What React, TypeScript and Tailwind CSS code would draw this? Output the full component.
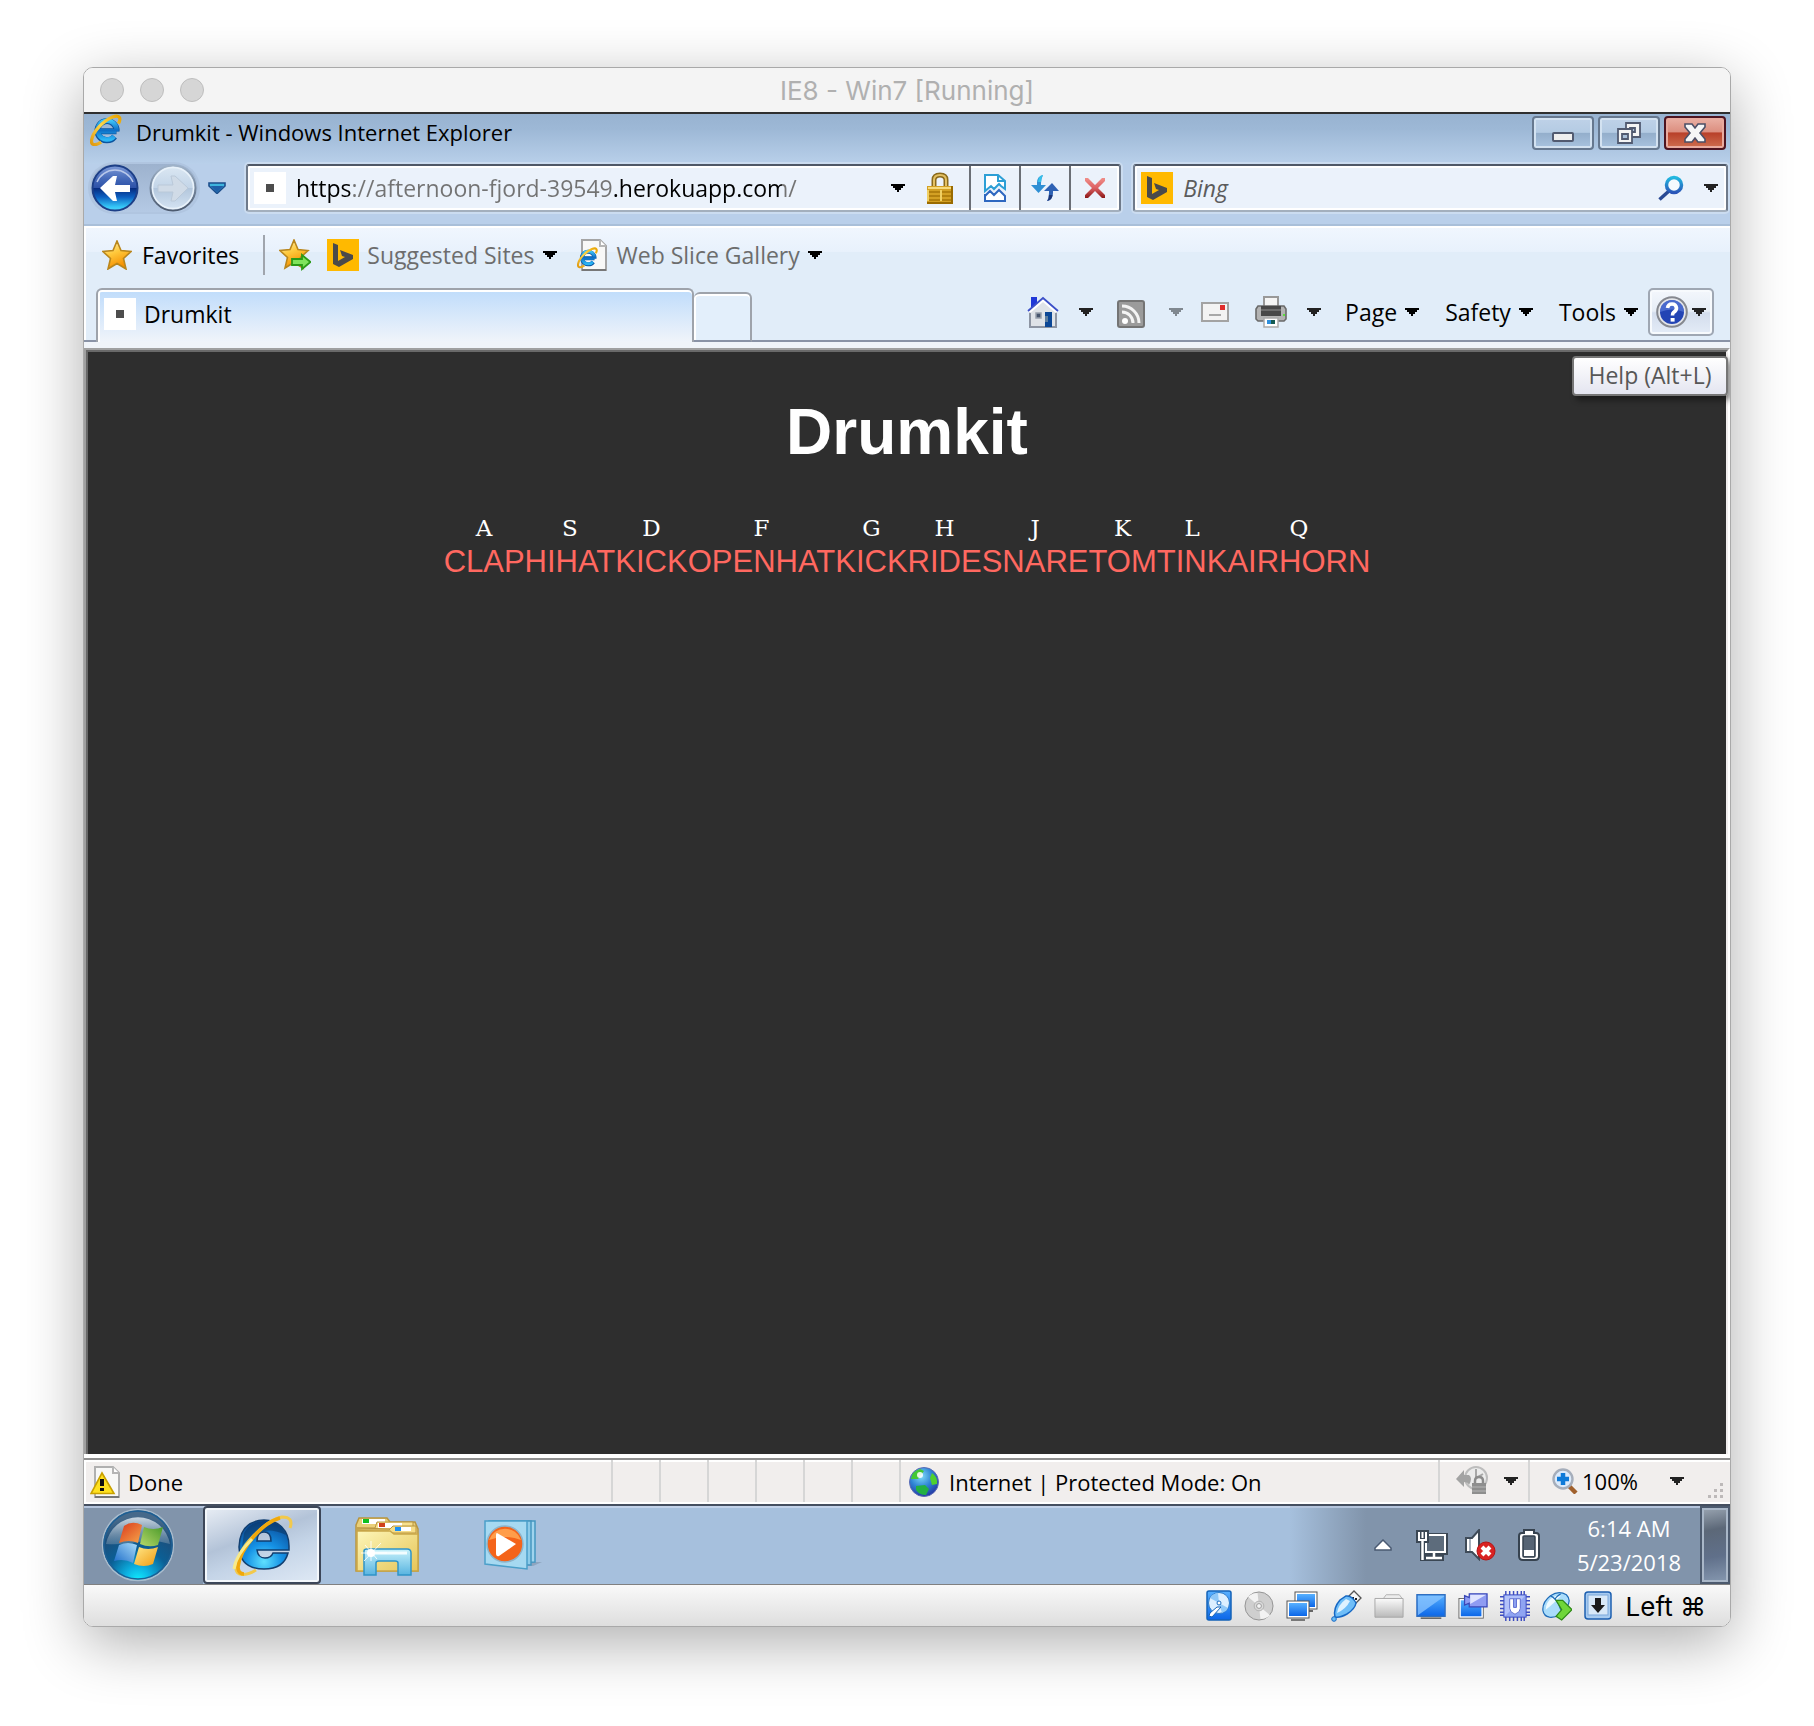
import React from "react";

const SEGOE = "font-['Open_Sans','Noto_Sans',sans-serif]";

/* ---------- shared paint ---------- */

function Paints() {
  return (
    <svg className="absolute size-0" aria-hidden="true">
      <defs>
        <radialGradient id="ieBlue" cx="0.5" cy="0.85" r="0.8">
          <stop offset="0" stopColor="#5fe0ff" />
          <stop offset="0.45" stopColor="#1592e6" />
          <stop offset="1" stopColor="#0b4f9c" />
        </radialGradient>
        <linearGradient id="ieSmall" x1="0" y1="0" x2="0" y2="1">
          <stop offset="0" stopColor="#3fc4f8" />
          <stop offset="0.5" stopColor="#0d6cc4" />
          <stop offset="1" stopColor="#2bb6f6" />
        </linearGradient>
        <linearGradient id="ieGold" x1="1" y1="0" x2="0" y2="1">
          <stop offset="0" stopColor="#e9a400" />
          <stop offset="0.5" stopColor="#ffd84a" />
          <stop offset="1" stopColor="#e09a10" />
        </linearGradient>
        <linearGradient id="starFill" x1="0" y1="0" x2="0.4" y2="1">
          <stop offset="0" stopColor="#fff3b8" />
          <stop offset="0.5" stopColor="#ffc93c" />
          <stop offset="1" stopColor="#f58f00" />
        </linearGradient>
        <linearGradient id="screenBlue" x1="0" y1="0" x2="0" y2="1">
          <stop offset="0" stopColor="#57b0ff" />
          <stop offset="1" stopColor="#0b66e8" />
        </linearGradient>
        <linearGradient id="tealBlue" x1="0" y1="0" x2="0" y2="1">
          <stop offset="0" stopColor="#22b8e0" />
          <stop offset="1" stopColor="#2a55b8" />
        </linearGradient>
        <linearGradient id="silver" x1="0" y1="0" x2="0" y2="1">
          <stop offset="0" stopColor="#fbfbfb" />
          <stop offset="1" stopColor="#b9b9b9" />
        </linearGradient>
      </defs>
    </svg>
  );
}

/* ---------- browser icons ---------- */

function Caret({ className = "text-black" }: { className?: string }) {
  return (
    <svg className={`h-2 w-3.5 shrink-0 ${className}`} viewBox="0 0 14 8" shapeRendering="crispEdges" aria-hidden="true">
      <path fill="currentColor" d="M0 0H14V2H12V4H10V6H8V8H6V6H4V4H2V2H0Z" />
    </svg>
  );
}

function IeGlyph() {
  return (
    <>
      <path d="M26.5 17.2H9.5M26.6 17.4A9.6 9.6 0 1 0 24.6 22.6" fill="none" stroke="#0b559f" strokeWidth="6" />
      <path d="M26 17.2H9.5M26.4 17.2A9.4 9.4 0 1 0 24.2 22.2" fill="none" stroke="url(#ieSmall)" strokeWidth="4.6" />
      <path d="M28.4 9.6C31.6 4 29.4 .4 22.6 3 13.4 6.6 3 17.6 1.6 26c-.9 5.4 3.6 6 9.6 2.2" fill="none" stroke="url(#ieGold)" strokeWidth="3.200" />
    </>
  );
}

function IeIcon() {
  return (
    <svg className="size-8 shrink-0" viewBox="0 0 32 32" aria-hidden="true">
      <IeGlyph />
    </svg>
  );
}

function IePageIcon() {
  return (
    <svg className="size-8 shrink-0" viewBox="0 0 32 32" aria-hidden="true">
      <path d="M5 1H23L29 7V31H5Z" fill="#f8f8f7" stroke="#a5a5a5" strokeWidth="2" />
      <path d="M5 31H29" stroke="#777" strokeWidth="2" />
      <path d="M23 1V7H29" fill="#fff" stroke="#b5b5b5" strokeWidth="2" />
      <g transform="translate(0 8) scale(.66)">
        <IeGlyph />
      </g>
    </svg>
  );
}

function Favicon() {
  return (
    <svg className="size-8 shrink-0" viewBox="0 0 32 32" aria-hidden="true">
      <rect width="32" height="32" fill="#fff" />
      <rect x="12" y="12" width="8" height="8" fill="#4d4d4d" />
    </svg>
  );
}

function BingIcon() {
  return (
    <svg className="size-8 shrink-0" viewBox="0 0 32 32" aria-hidden="true">
      <rect width="32" height="32" fill="#ffb900" />
      <path d="M6 4 11 6V22L18 18 15 17 13 11 26 16V20L12 28 6 25Z" fill="#4a4a4a" />
    </svg>
  );
}

function BackIcon() {
  return (
    <svg className="size-12" viewBox="0 0 48 48" aria-hidden="true">
      <defs>
        <linearGradient id="backFill" x1="0" y1="0" x2="0" y2="1">
          <stop offset="0" stopColor="#7f9bd8" />
          <stop offset="0.3" stopColor="#4468b8" />
          <stop offset="0.49" stopColor="#2d52a8" />
          <stop offset="0.5" stopColor="#06297c" />
          <stop offset="0.7" stopColor="#0c5fc0" />
          <stop offset="0.92" stopColor="#35c8f8" />
          <stop offset="1" stopColor="#4fd6f8" />
        </linearGradient>
      </defs>
      <circle cx="24" cy="24" r="22.500" fill="url(#backFill)" stroke="#1d3f87" strokeWidth="2" />
      <path d="M6 18A19.500 19.500 0 0 1 42 18" fill="none" stroke="#b9c8ea" strokeWidth="1.500" />
      <path d="M9 24 22 12H26L24 21H39V28H24L26 37H22Z" fill="#fff" />
    </svg>
  );
}

function ForwardIcon() {
  return (
    <svg className="size-12" viewBox="0 0 48 48" aria-hidden="true">
      <defs>
        <linearGradient id="fwdFill" x1="0" y1="0" x2="0" y2="1">
          <stop offset="0" stopColor="#dce8f3" />
          <stop offset="0.49" stopColor="#c3d5e8" />
          <stop offset="0.5" stopColor="#b2c6dc" />
          <stop offset="1" stopColor="#d6e5f4" />
        </linearGradient>
        <linearGradient id="fwdEdge" x1="0" y1="0" x2="0" y2="1">
          <stop offset="0" stopColor="#9fb2c8" />
          <stop offset="1" stopColor="#4d5b70" />
        </linearGradient>
      </defs>
      <circle cx="24" cy="24" r="22.500" fill="url(#fwdFill)" stroke="url(#fwdEdge)" strokeWidth="2" />
      <circle cx="24" cy="24" r="20.500" fill="none" stroke="#e9f2fa" strokeWidth="1.500" />
      <path d="M39 24 26 12H22L24 21H9V28H24L22 37H26Z" fill="#d0dbe7" stroke="#bac9d9" />
    </svg>
  );
}

function HistoryIcon() {
  return (
    <svg className="h-3 w-[18px]" viewBox="0 0 18 12" aria-hidden="true">
      <path d="M1 1H17V4L9 11.500 1 4Z" fill="#3fb4dd" stroke="#1d4e8c" strokeWidth="1.600" />
      <path d="M2.500 4H15.500L9 10.500Z" fill="#1f5fa8" />
    </svg>
  );
}

function LockIcon() {
  return (
    <svg className="h-8 w-[26px] shrink-0" viewBox="0 0 26 32" aria-hidden="true">
      <path d="M7 15V8Q7 3 13 3T19 8V15" fill="none" stroke="#8a6a1c" strokeWidth="5" />
      <path d="M7 15V8Q7 3 13 3T19 8V15" fill="none" stroke="#e2bf62" strokeWidth="2" />
      <rect y="14" width="26" height="18" fill="#d3a023" />
      <path d="M1 16H25" stroke="#f6da7c" strokeWidth="2" />
      <path d="M1 20H24M1 24H24M1 28H24" stroke="#a87508" strokeWidth="1.500" />
      <path d="M1 18V29M14 18V29" stroke="#f0cf62" strokeWidth="2" />
      <path d="M0 31H26M25 14V32" stroke="#9a6b00" strokeWidth="2" />
    </svg>
  );
}

function CompatIcon() {
  return (
    <svg className="h-8 w-7" viewBox="0 0 28 32" fill="none" aria-hidden="true">
      <path d="M4 14V3H17L24 9V17L20 14 18 12 13 17 10 14 4 19V14" fill="#fff" stroke="#2c9fd6" strokeWidth="2" />
      <path d="M17 3V9H24" stroke="#2c9fd6" strokeWidth="2" />
      <path d="M4 22V29H24V24L18 18 13 23 9 19 4 24" fill="#fff" stroke="#2f68c0" strokeWidth="2" />
    </svg>
  );
}

function RefreshIcon() {
  return (
    <svg className="h-7 w-7" viewBox="0 0 28 28" aria-hidden="true">
      <path d="M12 1Q6 2 6 9V11H0L7.500 19 15 11H10V9Q10 5 12 1Z" fill="#2f8fd4" />
      <path d="M12 1Q7 2 7 8L10 8Q10 4 12 1Z" fill="#35c2ea" />
      <path d="M16 27Q22 26 22 19V17H28L21 9 13 17H18V19Q18 24 16 27Z" fill="#2f62b4" />
      <path d="M16 27Q21 26 21.500 21H18Q18 25 16 27Z" fill="#1c3577" />
    </svg>
  );
}

function StopIcon() {
  return (
    <svg className="size-[22px]" viewBox="0 0 22 22" aria-hidden="true">
      <defs>
        <linearGradient id="stopFill" x1="0" y1="0" x2="0" y2="1">
          <stop offset="0" stopColor="#f08f8a" />
          <stop offset="0.5" stopColor="#dc5f62" />
          <stop offset="1" stopColor="#8b1818" />
        </linearGradient>
      </defs>
      <path d="M1 1H4L11 8 18 1H21V4L14 11 21 18V21H18L11 14 4 21H1V18L8 11 1 4Z" fill="url(#stopFill)" />
    </svg>
  );
}

function SearchIcon() {
  return (
    <svg className="size-[26px]" viewBox="0 0 26 26" fill="none" aria-hidden="true">
      <path d="M11 16 1.500 24.500" stroke="#2a4a94" strokeWidth="3.500" />
      <circle cx="16" cy="10" r="7.500" fill="#f4fafe" stroke="url(#tealBlue)" strokeWidth="3.500" />
    </svg>
  );
}

const STAR = "M15 1 19 10.500 29 11.500 21.500 18.500 24 29 15 23.500 6 29 8.500 18.500 1 11.500 11 10.500Z";

function StarIcon() {
  return (
    <svg className="size-[30px] shrink-0" viewBox="0 0 30 30" aria-hidden="true">
      <path d={STAR} fill="url(#starFill)" stroke="#b9861c" strokeWidth="1.600" />
    </svg>
  );
}

function StarAddIcon() {
  return (
    <svg className="size-8 shrink-0" viewBox="0 0 32 32" aria-hidden="true">
      <path d={STAR} fill="url(#starFill)" stroke="#b9861c" strokeWidth="1.600" />
      <path d="M13 20H23V16L31.500 23 23 30V26H13Z" fill="#7fe35c" stroke="#2b9a17" strokeWidth="1.800" />
    </svg>
  );
}

function HomeIcon() {
  return (
    <svg className="size-8 shrink-0" viewBox="0 0 32 32" aria-hidden="true">
      <rect x="4" y="1" width="6" height="10" fill="#2038d8" />
      <path d="M3 15 16 4 29 15V31H3Z" fill="#dfe3e8" stroke="#8d95a3" strokeWidth="2" />
      <path d="M2 16 16 4 30 16" fill="none" stroke="#fff" strokeWidth="3" />
      <path d="M1 15 16 2 31 15" fill="none" stroke="#3c50c8" strokeWidth="1.800" />
      <rect x="9" y="17" width="5" height="5" fill="#46546c" stroke="#98a0ac" strokeWidth="1.500" />
      <rect x="18" y="16" width="7" height="15" fill="#0b4796" />
      <rect x="18" y="20" width="3" height="6" fill="#5c7ea0" />
    </svg>
  );
}

function RssIcon() {
  return (
    <svg className="size-7 shrink-0" viewBox="0 0 28 28" aria-hidden="true">
      <rect x="1" y="1" width="26" height="26" rx="2" fill="#9b9b9b" stroke="#747474" strokeWidth="2" />
      <circle cx="8" cy="21" r="3" fill="#fff" />
      <path d="M5 12A11 11 0 0 1 16 23M5 6A17 17 0 0 1 22 23" fill="none" stroke="#f4f4f4" strokeWidth="3" />
    </svg>
  );
}

function MailIcon() {
  return (
    <svg className="h-5 w-7 shrink-0" viewBox="0 0 28 20" aria-hidden="true">
      <rect x="1" y="1" width="26" height="18" fill="#f3f3f3" stroke="#a3a3a3" strokeWidth="2" />
      <path d="M8 13H20" stroke="#8f8f8f" strokeWidth="1.500" />
      <rect x="19" y="3" width="5" height="5" fill="#e02c2c" />
    </svg>
  );
}

function PrinterIcon() {
  return (
    <svg className="size-8 shrink-0" viewBox="0 0 32 32" aria-hidden="true">
      <rect x="9" y="1" width="14" height="12" fill="#f5f5f5" stroke="#999" strokeWidth="2" />
      <path d="M3 10H29L31 13V23L29 25H3L1 23V13Z" fill="#b3b3b3" stroke="#6a6a6a" strokeWidth="1.600" />
      <rect x="6" y="10" width="20" height="10" fill="#484848" />
      <path d="M6 14H26" stroke="#6c6c6c" strokeWidth="2" />
      <rect x="28" y="18" width="2" height="2" fill="#5be03c" />
      <rect x="9" y="22" width="14" height="9" fill="#fff" stroke="#aaa" strokeWidth="1.500" />
      <path d="M12 24H20V28H12Z" fill="#2f8fdc" />
      <path d="M16 24H20V28H16Z" fill="#155b52" />
    </svg>
  );
}

function HelpIcon() {
  return (
    <svg className="size-8 shrink-0" viewBox="0 0 32 32" aria-hidden="true">
      <circle cx="16" cy="16" r="14.800" fill="#e4e6ea" stroke="#85888f" strokeWidth="2" />
      <circle cx="16" cy="16" r="12" fill="#2344b4" />
      <path d="M4 16A12 12 0 0 1 28 16Q16 11 4 16Z" fill="#5a7ad8" opacity=".7" />
      <path d="M11.500 12Q12 8 16 8T20.500 12Q20.500 14.500 17.500 16.500 16.500 17.300 16.500 19.500" fill="none" stroke="#fff" strokeWidth="3.600" />
      <rect x="14.600" y="22" width="4" height="3.600" fill="#fff" />
    </svg>
  );
}

function WarningPageIcon() {
  return (
    <svg className="size-8 shrink-0" viewBox="0 0 32 32" aria-hidden="true">
      <path d="M5 1H23L29 7V31H5Z" fill="#f8f8f7" stroke="#b0b0b0" strokeWidth="2" />
      <path d="M5 31H29" stroke="#777" strokeWidth="2" />
      <path d="M23 1V7H29" fill="#fff" stroke="#b5b5b5" strokeWidth="2" />
      <path d="M12 7 24 27.500H1Z" fill="#ffe11f" stroke="#c9a100" strokeWidth="1.600" />
      <path d="M12 13V20" stroke="#111" strokeWidth="4" />
      <rect x="10" y="22" width="4" height="3" fill="#111" />
    </svg>
  );
}

function GlobeIcon() {
  return (
    <svg className="size-[30px] shrink-0" viewBox="0 0 30 30" aria-hidden="true">
      <defs>
        <radialGradient id="sea" cx="0.4" cy="0.3" r="0.75">
          <stop offset="0" stopColor="#7fdcf8" />
          <stop offset="0.5" stopColor="#2f84d4" />
          <stop offset="1" stopColor="#2430a0" />
        </radialGradient>
      </defs>
      <circle cx="15" cy="15" r="14.500" fill="url(#sea)" stroke="#5a6bb5" />
      <path d="M2 12Q3 4 11 2L15 4 9 12Z" fill="#43c834" />
      <path d="M23 6Q29 10 28 17L23 18 21 11Z" fill="#4fd02e" />
      <path d="M7 19 16 18 20 22 17 28Q10 28 7 23Z" fill="#22b043" />
      <circle cx="11" cy="8" r="3" fill="#fff" opacity=".85" />
    </svg>
  );
}

function PrivacyIcon() {
  return (
    <svg className="size-8 shrink-0" viewBox="0 0 32 32" aria-hidden="true">
      <circle cx="20" cy="13" r="11" fill="#ececec" stroke="#bdbdbd" strokeWidth="2" />
      <path d="M20 4V13L27 9" fill="none" stroke="#a8a8a8" strokeWidth="2" />
      <path d="M0 14 8 5V10H13Q17 13 13 20 12 17 8 17V22Z" fill="#a3a3a3" />
      <path d="M19 20V16Q19 12 23 12T27 16V20" fill="none" stroke="#8c8c8c" strokeWidth="2.500" />
      <rect x="16" y="18" width="14" height="11" fill="#8e8e8e" />
      <path d="M16 22H30M16 26H30" stroke="#a9a9a9" strokeWidth="1.500" />
    </svg>
  );
}

function ZoomIcon() {
  return (
    <svg className="size-[26px] shrink-0" viewBox="0 0 26 26" aria-hidden="true">
      <path d="M16 17 24 25" stroke="#a0602c" strokeWidth="4.500" />
      <circle cx="11" cy="11" r="9.500" fill="#dceafb" stroke="#a6aebb" strokeWidth="2.400" />
      <path d="M11 5V17M5 11H17" stroke="#0f7ad8" strokeWidth="4.500" />
    </svg>
  );
}

function GripIcon() {
  return (
    <svg className="size-4 shrink-0" viewBox="0 0 16 16" fill="#bdb9b9" aria-hidden="true">
      <path d="M12 0H15V3H12ZM6 6H9V9H6ZM12 6H15V9H12ZM0 12H3V15H0ZM6 12H9V15H6ZM12 12H15V15H12Z" />
    </svg>
  );
}

/* ---------- taskbar icons ---------- */

function StartOrb() {
  return (
    <svg className="size-[74px]" viewBox="0 0 74 74" aria-hidden="true">
      <defs>
        <radialGradient id="orb" cx="0.5" cy="1" r="0.9">
          <stop offset="0" stopColor="#0ff0ff" />
          <stop offset="0.2" stopColor="#0cb4e4" />
          <stop offset="0.5" stopColor="#0b5f95" />
          <stop offset="0.8" stopColor="#1c4f7c" />
          <stop offset="1" stopColor="#46698a" />
        </radialGradient>
        <linearGradient id="orbGloss" x1="0" y1="0" x2="0" y2="1">
          <stop offset="0" stopColor="#d2dde6" stopOpacity="0.95" />
          <stop offset="1" stopColor="#7c97ae" stopOpacity="0.45" />
        </linearGradient>
        <linearGradient id="flagRed" x1="0" y1="0" x2="1" y2="1">
          <stop offset="0" stopColor="#d8371c" />
          <stop offset="1" stopColor="#f7a64a" />
        </linearGradient>
        <linearGradient id="flagGreen" x1="1" y1="0" x2="0" y2="1">
          <stop offset="0" stopColor="#4a9a2a" />
          <stop offset="1" stopColor="#b7d86a" />
        </linearGradient>
        <linearGradient id="flagBlue" x1="1" y1="0" x2="0" y2="1">
          <stop offset="0" stopColor="#a9dcfa" />
          <stop offset="1" stopColor="#1c6cc8" />
        </linearGradient>
        <linearGradient id="flagYellow" x1="0" y1="0" x2="1" y2="1">
          <stop offset="0" stopColor="#ffe98a" />
          <stop offset="1" stopColor="#f09a10" />
        </linearGradient>
      </defs>
      <circle cx="37" cy="37" r="35.500" fill="url(#orb)" stroke="#a9bccd" strokeWidth="1.500" />
      <circle cx="37" cy="37" r="34" fill="none" stroke="#1d5f94" strokeWidth="1.500" />
      <path d="M5 36A32.500 32.500 0 0 1 69 36Q54 31 37 34T5 36Z" fill="url(#orbGloss)" />
      <path d="M23 18Q31 12 41 17L37 35Q28 31 18 35Z" fill="url(#flagRed)" />
      <path d="M43 19Q52 23 62 19L57 37Q48 40 39 36Z" fill="url(#flagGreen)" />
      <path d="M18 37Q27 33 36 37L32 55Q23 50 13 53Z" fill="url(#flagBlue)" />
      <path d="M38 39Q47 43 57 39L52 56Q43 60 33 56Z" fill="url(#flagYellow)" />
    </svg>
  );
}

function IeBigIcon() {
  return (
    <svg className="size-16" viewBox="0 0 64 64" aria-hidden="true">
      <path
        d="M34 7C48 7 59 17 59 33V37H27Q28 45 35 45 41 45 43 40H58Q54 56 34 56 10 56 9 34 10 8 34 7ZM27 28H41Q41 19 34 19T27 28Z"
        fill="url(#ieBlue)"
        stroke="#123f70"
        strokeWidth="1.500"
      />
      <path d="M14 20Q20 9 33 8 50 8 56 22 40 14 27 20 16 26 12 34Z" fill="#0b2c50" opacity=".45" />
      <path d="M60 15Q64 4 52 4C36 7 8 34 6 54 5 64 16 63 26 57" fill="none" stroke="#f2c94c" strokeWidth="3" />
      <path d="M50 5C34 9 10 34 8 54 8 60 12 61 14 61" fill="none" stroke="#f0a80c" strokeWidth="3.600" />
      <path d="M22 26C10 38 5 48 4 56" fill="none" stroke="#f7ea8c" strokeWidth="3" />
    </svg>
  );
}

function ExplorerIcon() {
  return (
    <svg className="size-16" viewBox="0 0 64 64" aria-hidden="true">
      <defs>
        <linearGradient id="folder" x1="0" y1="0" x2="1" y2="1">
          <stop offset="0" stopColor="#fdf6b8" />
          <stop offset="1" stopColor="#e6c558" />
        </linearGradient>
        <linearGradient id="stand" x1="0" y1="0" x2="0" y2="1">
          <stop offset="0" stopColor="#c8f2fb" />
          <stop offset="1" stopColor="#58b4e0" />
        </linearGradient>
      </defs>
      <path d="M1 10 4 3H32L35 7H60L63 14V56H1Z" fill="#e9cf78" stroke="#b89540" strokeWidth="1.500" />
      <rect x="7" y="4" width="23" height="5" fill="#fff" />
      <rect x="8" y="4" width="6" height="4" fill="#10c020" />
      <path d="M2 13H20L22 7H58V14H38Z" fill="#f7e08e" stroke="#b89540" />
      <rect x="23" y="8" width="24" height="5" fill="#fff" />
      <rect x="24" y="8" width="6" height="4" fill="#d0401c" />
      <path d="M2 15H34L38 11H61V18H38Z" fill="#f5dc86" stroke="#b89540" />
      <rect x="40" y="12" width="16" height="4" fill="#fff" />
      <rect x="40" y="12" width="6" height="4" fill="#1a90f4" />
      <path d="M2 16H35L39 19H63V56H2Z" fill="url(#folder)" stroke="#c9a648" strokeWidth="1.500" />
      <path d="M9 36Q9 34 12 34H52Q56 34 56 38V60H43V48Q43 46 40 46H24Q21 46 21 48V60H9Z" fill="url(#stand)" stroke="#2f94c8" strokeWidth="1.500" />
      <path d="M13 38H52" stroke="#f2fdff" strokeWidth="3" />
      <path d="M16 26V46M6 38H32M10 30 22 44M26 28 9 46" stroke="#fff" opacity=".85" />
      <circle cx="16" cy="38" r="4" fill="#fff" />
    </svg>
  );
}

function MediaPlayerIcon() {
  return (
    <svg className="h-[58px] w-[60px]" viewBox="0 0 60 58" aria-hidden="true">
      <path d="M46 46H59L50 50H44Z" fill="#7f93ac" opacity=".6" />
      <path d="M10 5H52V46L12 48Z" fill="#9fd4ee" stroke="#4596c0" strokeWidth="1.500" />
      <path d="M6 5H48V49L8 48Z" fill="#8ccbe9" stroke="#4596c0" strokeWidth="1.500" />
      <path d="M2 5H44V53L2 48Z" fill="#a6d9f1" stroke="#4b9fc9" strokeWidth="1.500" />
      <circle cx="22" cy="28" r="18" fill="#f4641a" stroke="#8cb4cc" strokeWidth="1.500" />
      <path d="M6 24A17 17 0 0 1 38 24Q22 18 6 24Z" fill="#ff9d4a" />
      <path d="M14 17 33 28 16 40Q13 41 13 37V19Q13 17 14 17Z" fill="#fff" />
    </svg>
  );
}

function TrayUpIcon() {
  return (
    <svg className="h-3 w-[18px]" viewBox="0 0 18 12" aria-hidden="true">
      <path d="M9 1 17 9V11H1V9Z" fill="#fff" stroke="#4a5a72" strokeWidth="1.500" />
    </svg>
  );
}

function TrayNetworkIcon() {
  return (
    <svg className="size-8" viewBox="0 0 32 32" aria-hidden="true">
      <rect x="8" y="4" width="24" height="22" fill="#3b4754" />
      <rect x="10" y="6" width="19" height="17" fill="#5d6c7c" stroke="#fff" strokeWidth="2" />
      <path d="M9 29H28M18 25V29" stroke="#3b4754" strokeWidth="6" />
      <path d="M10 29H26M18 24V29" stroke="#fff" strokeWidth="2.500" />
      <path d="M0 1H13V14H9V32H4V14H0Z" fill="#3b4754" />
      <path d="M3 3V11H10V3M6.500 3V9" fill="none" stroke="#fff" strokeWidth="2" />
      <path d="M6.500 11V31" stroke="#fff" strokeWidth="2.500" />
    </svg>
  );
}

function TrayVolumeIcon() {
  return (
    <svg className="size-8" viewBox="0 0 32 32" aria-hidden="true">
      <path d="M2 9H8L15 1V30L8 23H2Z" fill="#fff" stroke="#3f4b58" strokeWidth="2" />
      <path d="M6 10V22" stroke="#8b97a6" strokeWidth="1.500" />
      <circle cx="22" cy="22" r="9" fill="#d92222" stroke="#b41414" />
      <path d="M18 18 26 26M26 18 18 26" stroke="#fff" strokeWidth="4" />
    </svg>
  );
}

function TrayBatteryIcon() {
  return (
    <svg className="h-8 w-[22px]" viewBox="0 0 22 32" aria-hidden="true">
      <path d="M6 1H16V4H18Q21 4 21 7V27Q21 31 17 31H5Q1 31 1 27V7Q1 4 4 4H6Z" fill="#fff" stroke="#36424f" strokeWidth="2" />
      <rect x="5" y="7" width="12" height="21" rx="1" fill="#566474" stroke="#36424f" strokeWidth="1.500" />
      <rect x="6" y="21" width="10" height="6" fill="#fff" />
    </svg>
  );
}

/* ---------- virtual machine status icons ---------- */

function HardDiskIcon() {
  return (
    <svg className="h-[31px] w-[26px]" viewBox="0 0 26 31" aria-hidden="true">
      <rect x="1" y="1" width="24" height="29" rx="2" fill="url(#screenBlue)" stroke="#1463b8" strokeWidth="1.500" />
      <circle cx="13" cy="13" r="10.500" fill="#dcefff" stroke="#2f7cc8" />
      <path d="M13 13 4 8A10 10 0 0 1 12 3ZM13 13 22 18A10 10 0 0 1 16 23Z" fill="#8fc8f8" />
      <circle cx="13" cy="13" r="2" fill="#fff" stroke="#1a6cc0" />
      <path d="M15 17 6 27 3 26 4 23 11 17Z" fill="#fff" stroke="#1463b8" />
    </svg>
  );
}

function DiscIcon() {
  return (
    <svg className="size-[30px]" viewBox="0 0 31 31" aria-hidden="true">
      <circle cx="15.500" cy="15.500" r="14.500" fill="#cfcfcf" stroke="#929292" />
      <path d="M15.500 15.500 4 6A15 15 0 0 1 14 2ZM15.500 15.500 27 25A15 15 0 0 1 17 29Z" fill="#f3f3f3" />
      <circle cx="15.500" cy="15.500" r="5" fill="#d9d9d9" stroke="#b0b0b0" />
      <circle cx="15.500" cy="15.500" r="2.500" fill="#f6f6f6" stroke="#9a9a9a" />
    </svg>
  );
}

function VmNetworkIcon() {
  return (
    <svg className="h-[31px] w-8" viewBox="0 0 32 31" aria-hidden="true">
      <rect x="9" y="2" width="22" height="17" fill="#fff" stroke="#555" />
      <rect x="11" y="4" width="18" height="13" fill="url(#screenBlue)" />
      <path d="M20 21H27" stroke="#666" strokeWidth="2" />
      <rect x="1" y="11" width="22" height="17" fill="#fff" stroke="#555" />
      <rect x="3" y="13" width="18" height="13" fill="url(#screenBlue)" />
      <path d="M5 30H19" stroke="#555" strokeWidth="1.500" />
    </svg>
  );
}

function UsbIcon() {
  return (
    <svg className="size-8" viewBox="0 0 32 32" aria-hidden="true">
      <path d="M18 7 24 1 31 8 25 14Z" fill="#f6f6f6" stroke="#555" strokeWidth="1.300" />
      <path d="M22 7H24V9H22ZM25 8H27V10H25Z" fill="#222" />
      <path d="M16 6Q22 5 26 13 25 19 17 24 10 28 5 27 3 18 10 10Z" fill="#6fbef8" stroke="#1668c4" strokeWidth="1.500" />
      <path d="M7 23Q8 15 16 9L20 11Q16 19 7 23Z" fill="#dff2ff" />
      <circle cx="4" cy="29" r="2.300" fill="#6fc0f6" stroke="#1668c4" />
    </svg>
  );
}

function FolderIcon() {
  return (
    <svg className="h-[31px] w-[30px]" viewBox="0 0 32 31" aria-hidden="true">
      <path d="M10 8 13 4H27L30 8V12H10Z" fill="#ededed" stroke="#b0b0b0" />
      <path d="M1 8H31V28H1Z" fill="url(#silver)" stroke="#a5a5a5" />
    </svg>
  );
}

function DisplayIcon() {
  return (
    <svg className="h-[31px] w-[30px]" viewBox="0 0 32 31" aria-hidden="true">
      <rect x="1" y="4" width="30" height="23" fill="url(#screenBlue)" stroke="#2f6ec0" strokeWidth="1.500" />
      <path d="M2 26 30 6V5H2Z" fill="#8cc6ff" opacity=".75" />
      <path d="M5 29H27" stroke="#555" strokeWidth="1.500" />
    </svg>
  );
}

function CaptureIcon() {
  return (
    <svg className="h-[31px] w-[30px]" viewBox="0 0 32 31" aria-hidden="true">
      <rect x="1" y="8" width="26" height="21" fill="#fff" stroke="#666" />
      <rect x="3" y="10" width="22" height="17" fill="url(#screenBlue)" />
      <path d="M7 5 12 7V3H31V17H12V13L7 15Z" fill="#8f9cf2" stroke="#3a48b8" strokeWidth="1.300" />
      <path d="M13 4H30L13 14Z" fill="#dfe4ff" />
    </svg>
  );
}

function ChipIcon() {
  return (
    <svg className="size-[30px]" viewBox="0 0 31 31" aria-hidden="true">
      <path
        d="M6 0V31M10 0V31M14 0V31M18 0V31M22 0V31M25 0V31M0 6H31M0 10H31M0 14H31M0 18H31M0 22H31M0 25H31"
        stroke="#3c4cc0"
        strokeWidth="1.500"
      />
      <rect x="4" y="4" width="23" height="23" fill="#8fa4f2" stroke="#3c4cc0" />
      <path d="M5 26V5H26Z" fill="#b3c2fa" />
      <path d="M10 8H21V18Q21 22 15.500 24 10 22 10 18Z" fill="#fff" stroke="#5c6cd0" />
      <path d="M14 8V17H17V8" fill="#8fa4f2" stroke="#5c6cd0" />
    </svg>
  );
}

function MouseIcon() {
  return (
    <svg className="h-[31px] w-[30px]" viewBox="0 0 32 31" aria-hidden="true">
      <path d="M1 21Q0 12 9 5 18-1 26 4 32 10 26 18 18 29 8 28 2 27 1 21Z" fill="#a9dcfb" stroke="#1f6cb8" strokeWidth="1.300" />
      <path d="M4 20Q4 12 11 7 16 4 20 5 14 12 4 20Z" fill="#eefaff" />
      <path d="M9 5Q17 9 20 20M20 3Q14 7 14 9" fill="none" stroke="#1f6cb8" strokeWidth="1.300" />
      <path d="M15 10H22L32 20 21 31 15 27 21 20Z" fill="#6fd63a" stroke="#2f8a18" strokeWidth="1.300" />
    </svg>
  );
}

function HostKeyIcon() {
  return (
    <svg className="h-[29px] w-7" viewBox="0 0 28 29" aria-hidden="true">
      <rect x="1" y="1" width="26" height="27" rx="3" fill="#a8cbf0" stroke="#1c5fb0" strokeWidth="1.500" />
      <rect x="4" y="4" width="20" height="20" fill="#d8e8f8" stroke="#7ba7da" />
      <path d="M11 7H17V14H21L14 22 7 14H11Z" fill="#1b1b1b" />
    </svg>
  );
}

/* ---------- window chrome ---------- */

function MacTitleBar() {
  return (
    <header className="grid h-[46px] grid-cols-[1fr_auto_1fr] items-center border-b-2 border-[#2f2f2f] bg-[#f4f4f4] px-4">
      <div className="flex gap-4">
        {["Close", "Minimize", "Zoom"].map((name) => (
          <button key={name} aria-label={name} className="size-6 rounded-full border border-[#bebebe] bg-[#d6d6d6]" />
        ))}
      </div>
      <h2 className="pt-0.5 font-['Inter',sans-serif] text-[26px] leading-8 text-[#b0b0b0]">IE8 - Win7 [Running]</h2>
    </header>
  );
}

function IeTitleBar() {
  const glass =
    "border-[#66788f] bg-[linear-gradient(#bfd2e8_0%,#b4cbe3_48%,#93aecb_50%,#a9c3df_100%)] shadow-[inset_0_0_0_2px_#d3e2f1]";
  return (
    <div className="flex h-[50px] items-start bg-[linear-gradient(#98b3d1_0%,#9db8d6_30%,#b9d0ea_100%)] pl-1.5 pr-1">
      <IeIcon />
      <span className="ml-3.5 mt-0.5 text-[22px] leading-8 text-black">Drumkit - Windows Internet Explorer</span>
      <div className="ml-auto mt-0.5 flex gap-1">
        <button aria-label="Minimize" className={`flex h-[34px] w-[62px] items-center justify-center rounded-[4px] border-2 ${glass}`}>
          <svg className="mt-2 h-2.5 w-[22px]" viewBox="0 0 22 10" aria-hidden="true">
            <rect x="1" y="1" width="20" height="8" rx="1" fill="#eee" stroke="#515a70" strokeWidth="2" />
          </svg>
        </button>
        <button aria-label="Restore" className={`flex h-[34px] w-[62px] items-center justify-center rounded-[4px] border-2 ${glass}`}>
          <svg className="h-[22px] w-6" viewBox="0 0 24 22" fill="#f4f4f4" stroke="#515a70" strokeWidth="1.800" aria-hidden="true">
            <path d="M9 1H23V15H9Z" />
            <path d="M13 6H18V10H13Z" fill="#a9bfd8" />
            <path d="M1 7H15V21H1Z" />
            <path d="M5 12H11V17H5Z" fill="#a9bfd8" />
          </svg>
        </button>
        <button
          aria-label="Close window"
          className="flex h-[34px] w-[62px] items-center justify-center rounded-[4px] border-2 border-[#4d1420] bg-[linear-gradient(#eab0a4_0%,#dc8f80_46%,#b8402a_50%,#cf6f50_100%)] shadow-[inset_0_0_0_2px_#e9aa9e]"
        >
          <svg className="h-5 w-6" viewBox="0 0 24 20" aria-hidden="true">
            <path d="M2 1H9L12 5 15 1H22V4L17 10 22 16V19H15L12 15 9 19H2V16L7 10 2 4Z" fill="#f6f6f6" stroke="#4c4f66" strokeWidth="1.600" />
          </svg>
        </button>
      </div>
    </div>
  );
}

function NavBar() {
  const box =
    "flex h-12 items-center rounded-[3px] border-2 border-[#6f7a8a] border-t-[#4f5867] border-b-[#a3afbd] bg-[#ebf2fb] shadow-[inset_0_0_0_2px_#ffffff,0_0_0_2px_#cbdcf0]";
  const cell = "flex h-full w-[50px] items-center justify-center border-l-2 border-[#6b6f76]";
  return (
    <div className="flex items-center border-b-2 border-[#a9bfd9] bg-[#b9cfea] pb-3 pl-1.5 pr-0.5">
      <div className="flex items-center gap-2.5 rounded-full bg-[linear-gradient(#9db2ce,#b4c9e4)] px-px shadow-[0_0_0_2px_#b0c5e0]">
        <button aria-label="Back">
          <BackIcon />
        </button>
        <button aria-label="Forward">
          <ForwardIcon />
        </button>
      </div>
      <button aria-label="Recent pages" className="ml-2.5 mr-5">
        <HistoryIcon />
      </button>
      <div className={`min-w-0 flex-[882] pl-1.5 ${box}`}>
        <Favicon />
        <input
          aria-label="Address"
          defaultValue="https://afternoon-fjord-39549.herokuapp.com/"
          className="ml-2.5 min-w-0 flex-1 bg-[linear-gradient(90deg,#000_0_57px,#737373_57px_317px,#000_317px_486px,#737373_486px)] bg-clip-text text-[23px] leading-8 text-transparent outline-none"
        />
        <button aria-label="Show address history" className="mr-[22px]">
          <Caret />
        </button>
        <button aria-label="Security report" className="mr-4">
          <LockIcon />
        </button>
        <button aria-label="Compatibility view" className={cell}>
          <CompatIcon />
        </button>
        <button aria-label="Refresh" className={cell}>
          <RefreshIcon />
        </button>
        <button aria-label="Stop" className={cell}>
          <StopIcon />
        </button>
      </div>
      <div className={`ml-3 min-w-0 flex-[588] pl-1.5 pr-2 ${box}`}>
        <BingIcon />
        <input
          type="search"
          aria-label="Search"
          placeholder="Bing"
          className="ml-2.5 min-w-0 flex-1 bg-transparent text-[23px] italic leading-8 outline-none placeholder:text-[#5c5c5c] placeholder:opacity-100"
        />
        <button aria-label="Search" className="mr-5">
          <SearchIcon />
        </button>
        <button aria-label="Search options">
          <Caret className="text-[#222]" />
        </button>
      </div>
    </div>
  );
}

function FavoritesBar() {
  return (
    <div className="flex h-[60px] items-center pb-1.5 pl-[18px] text-[23px] leading-8">
      <button className="flex items-center gap-2.5 text-black">
        <StarIcon />
        Favorites
      </button>
      <span className="ml-6 h-10 w-0.5 bg-[#a0a5ad]" />
      <button aria-label="Add to Favorites Bar" className="ml-3.5">
        <StarAddIcon />
      </button>
      <button className="ml-4 flex items-center gap-2 text-[#6d6d6d]">
        <BingIcon />
        Suggested Sites
        <Caret />
      </button>
      <button className="ml-5 flex items-center gap-2 text-[#6d6d6d]">
        <IePageIcon />
        Web Slice Gallery
        <Caret />
      </button>
    </div>
  );
}

function TabRow() {
  const line = "border-b-2 border-[#8a93a6]";
  return (
    <div className="flex h-[54px] items-stretch text-[23px] leading-8 text-black">
      <div className={`w-3 ${line}`} />
      <button className="flex flex-[599] items-center gap-2 rounded-t-[6px] border-2 border-b-0 border-[#9ea3ab] bg-[linear-gradient(#bfdcfb_0%,#f0f4fa_100%)] pb-1.5 pl-1.5 pt-0.5 text-left shadow-[inset_0_2px_0_#ffffff,inset_2px_0_0_#ffffff]">
        <Favicon />
        Drumkit
      </button>
      <button
        aria-label="New tab"
        className="mt-1 w-[58px] rounded-t-[6px] border-2 border-l-0 border-[#9ea3ab] border-b-[#8a93a6] bg-[#e3effb] shadow-[inset_0_2px_0_#ffffff,inset_2px_0_0_#ffffff]"
      />
      <div className={`flex flex-[980] items-center justify-end pb-1 pr-4 ${line}`}>
        <button aria-label="Home">
          <HomeIcon />
        </button>
        <button aria-label="Home options" className="ml-5">
          <Caret className="text-[#222]" />
        </button>
        <button aria-label="Feeds" className="ml-6 mt-1">
          <RssIcon />
        </button>
        <button aria-label="Feed options" className="ml-6">
          <Caret className="text-[#808890]" />
        </button>
        <button aria-label="Read mail" className="ml-[18px]">
          <MailIcon />
        </button>
        <button aria-label="Print" className="ml-[26px]">
          <PrinterIcon />
        </button>
        <button aria-label="Print options" className="ml-5">
          <Caret className="text-[#222]" />
        </button>
        <button className="ml-6 flex items-center gap-2">
          Page
          <Caret />
        </button>
        <button className="ml-[26px] flex items-center gap-2">
          Safety
          <Caret />
        </button>
        <button className="ml-[26px] flex items-center gap-2">
          Tools
          <Caret />
        </button>
        <div className="relative ml-2.5">
          <button
            aria-label="Help"
            aria-describedby="help-tip"
            className="flex h-12 w-[66px] items-center gap-1 rounded-[5px] border-2 border-[#9fa7b3] bg-[linear-gradient(#f3f7fc_0%,#e6edf6_48%,#d3dded_52%,#e4ecf7_100%)] pl-1.5 shadow-[inset_0_0_0_2px_#f7fafd]"
          >
            <HelpIcon />
            <Caret className="text-[#222]" />
          </button>
          <span
            id="help-tip"
            role="tooltip"
            className="absolute -right-3.5 top-[68px] z-10 h-10 w-[156px] whitespace-nowrap rounded-[4px] border-2 border-[#767676] bg-[linear-gradient(#ffffff,#e4e5f0)] text-center text-[23px] leading-[34px] text-[#575757] shadow-[4px_4px_6px_rgba(0,0,0,0.45)]"
          >
            Help (Alt+L)
          </span>
        </div>
      </div>
    </div>
  );
}

/* ---------- page ---------- */

const SOUNDS = [
  ["A", "CLAP"],
  ["S", "HIHAT"],
  ["D", "KICK"],
  ["F", "OPENHAT"],
  ["G", "KICK"],
  ["H", "RIDE"],
  ["J", "SNARE"],
  ["K", "TOM"],
  ["L", "TINK"],
  ["Q", "AIRHORN"],
];

function DrumkitPage() {
  return (
    <div className="flex flex-1 flex-col border-2 border-b-0 border-[#a0a0a0] border-r-white">
      <main className="flex-1 border-2 border-b-0 border-[#696969] border-r-[#f0eded] bg-[#2e2e2e] pt-11 font-['Liberation_Sans',Arial,sans-serif]">
        <h1 className="text-center text-[64px] font-bold leading-[72px] text-white">Drumkit</h1>
        <div className="mt-11 flex justify-center">
          {SOUNDS.map(([key, sound]) => (
            <button key={key} className="flex flex-col items-center">
              <kbd className="font-['DejaVu_Serif',serif] text-[23px] leading-8 text-white">{key}</kbd>
              <span className="text-[31px] leading-9 text-[#ff6860]">{sound}</span>
            </button>
          ))}
        </div>
      </main>
    </div>
  );
}

function IeStatusBar() {
  const cell = "h-full border-l-2 border-[#d6d6d6]";
  return (
    <footer className="border-t-4 border-white">
      <div className="flex h-[46px] items-center border-b-2 border-t-2 border-b-white border-t-[#8f8f8f] bg-[#f1eeed] pl-1.5 text-[22px] leading-8 text-black shadow-[inset_0_2px_0_#ffffff,inset_2px_0_0_#ffffff]">
        <div className="flex flex-[526] items-center gap-1.5 pt-0.5">
          <WarningPageIcon />
          Done
        </div>
        {[0, 1, 2, 3, 4, 5].map((n) => (
          <span key={n} className={`w-12 ${cell}`} />
        ))}
        <div className={`flex flex-[534] items-center gap-2.5 pl-2 pt-0.5 ${cell}`}>
          <GlobeIcon />
          Internet | Protected Mode: On
        </div>
        <div className={`flex w-[90px] items-center gap-4 pl-4 ${cell}`}>
          <PrivacyIcon />
          <button aria-label="Privacy options">
            <Caret className="text-[#222]" />
          </button>
        </div>
        <div className={`flex w-[182px] items-center pl-[22px] ${cell}`}>
          <ZoomIcon />
          <span className="ml-1">100%</span>
          <button aria-label="Zoom level" className="ml-8">
            <Caret className="text-[#222]" />
          </button>
        </div>
        <div className="-ml-0.5 w-[22px] pt-5">
          <GripIcon />
        </div>
      </div>
    </footer>
  );
}

function Taskbar() {
  return (
    <nav className="flex h-[80px] items-stretch border-t-2 border-[#454f60] bg-[#a6c0dd] shadow-[inset_0_2px_0_#c3d3ea]">
      <button aria-label="Start" className="flex w-[119px] items-center bg-[#8194ab] pl-[17px] shadow-[inset_0_2px_0_#b5c5dd]">
        <StartOrb />
      </button>
      <button
        aria-label="Internet Explorer"
        className="flex w-[118px] items-center justify-center rounded-[4px] border-2 border-[#3c4658] bg-[linear-gradient(160deg,#e9eef5_0%,#b3c3d8_40%,#c4d4e7_60%,#dfe9f5_100%)] shadow-[inset_0_0_0_2px_#f3f7fb]"
      >
        <IeBigIcon />
      </button>
      <button aria-label="Windows Explorer" className="ml-[34px] flex items-center pt-1">
        <ExplorerIcon />
      </button>
      <button aria-label="Windows Media Player" className="ml-16 flex items-center">
        <MediaPlayerIcon />
      </button>
      <div className="ml-auto flex items-center bg-[linear-gradient(90deg,#a6c0dd_0,#8194ab_76px)] pl-[84px] shadow-[inset_0_2px_0_#b5c5dd]">
        <button aria-label="Show hidden icons">
          <TrayUpIcon />
        </button>
        <button aria-label="Network" className="ml-6">
          <TrayNetworkIcon />
        </button>
        <button aria-label="Volume" className="ml-4">
          <TrayVolumeIcon />
        </button>
        <button aria-label="Battery" className="ml-[22px]">
          <TrayBatteryIcon />
        </button>
        <div className="w-[160px] pl-[18px] text-center text-[22px] leading-[34px] text-white">
          <div>6:14 AM</div>
          <div>5/23/2018</div>
        </div>
        <button
          aria-label="Show desktop"
          className="h-full w-[30px] border-2 border-[#4c5a6e] bg-[linear-gradient(170deg,#9aa5b2_0%,#5c6878_30%,#60708a_65%,#8698b0_100%)] shadow-[inset_0_0_0_2px_#a9b7c8]"
        />
      </div>
    </nav>
  );
}

function VmStatusBar() {
  return (
    <div className="flex h-[42px] items-center justify-end gap-3 border-t border-[#808080] bg-[linear-gradient(#f9f9f9,#dedede)] pr-6">
      <HardDiskIcon />
      <DiscIcon />
      <VmNetworkIcon />
      <UsbIcon />
      <FolderIcon />
      <DisplayIcon />
      <CaptureIcon />
      <ChipIcon />
      <MouseIcon />
      <HostKeyIcon />
      <span className="ml-0.5 pt-0.5 font-['Inter','DejaVu_Sans',sans-serif] text-[26px] leading-8 text-black">Left ⌘</span>
    </div>
  );
}

export default function App() {
  return (
    <div className={`flex min-h-screen flex-col bg-white px-[83px] pb-[99px] pt-[67px] ${SEGOE}`}>
      <Paints />
      <div className="flex flex-1 flex-col overflow-hidden rounded-[10px] border border-[#a9a9a9] shadow-[0_16px_60px_rgba(0,0,0,0.32)]">
        <MacTitleBar />
        <IeTitleBar />
        <NavBar />
        <div className="border-t-2 border-white bg-[linear-gradient(#f0f6fe_0px,#e8f1fc_24px,#e1edf9_24px,#e1edf9_100%)] shadow-[inset_2px_0_0_#ffffff]">
          <FavoritesBar />
          <TabRow />
        </div>
        <div className="h-1.5 bg-[#f0f4f9]" />
        <DrumkitPage />
        <IeStatusBar />
        <Taskbar />
        <VmStatusBar />
      </div>
    </div>
  );
}
